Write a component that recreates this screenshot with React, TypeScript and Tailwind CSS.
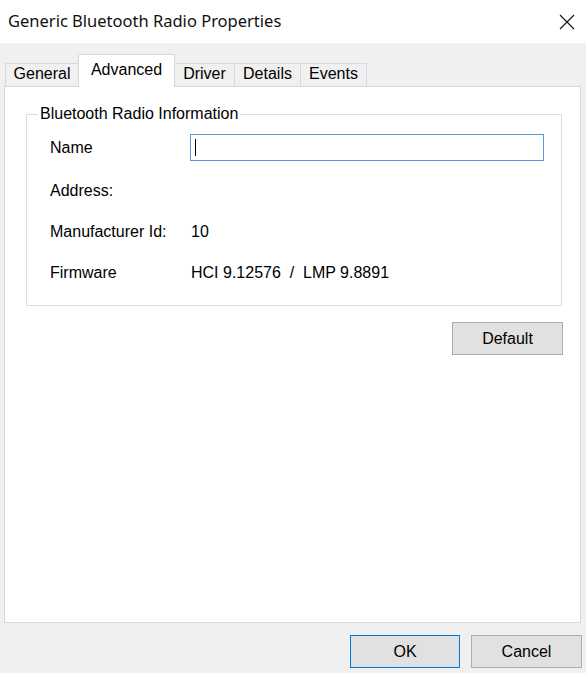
import React from 'react';

const tabs: { name: string; w: string }[] = [
    { name: 'General', w: 'w-[74px]' },
    { name: 'Advanced', w: 'w-[97px]' },
    { name: 'Driver', w: 'w-[61px]' },
    { name: 'Details', w: 'w-[67px]' },
    { name: 'Events', w: 'w-[67px]' },
];

const rows: { label: string; value?: string }[] = [
    { label: 'Address:' },
    { label: 'Manufacturer Id:', value: '10' },
    { label: 'Firmware', value: 'HCI 9.12576  /  LMP 9.8891' },
];

const App: React.FC = () => {
    return (
        <div className="w-[586px] h-[673px] bg-[#f0f0f0] flex flex-col text-[#000] overflow-hidden" style={{ fontFamily: '"Liberation Sans", Arial, sans-serif' }}>
            {/* title bar */}
            <div className="h-[43px] bg-white flex items-center justify-between pl-[8px] pr-[10px] shrink-0">
                <span className="text-[16.5px] text-[#111]" style={{ fontFamily: '"Noto Sans", "Open Sans", sans-serif' }}>Generic Bluetooth Radio Properties</span>
                <svg width="16" height="16" viewBox="0 0 16 16" className="mr-[1px]">
                    <path d="M1 1 L15 15 M15 1 L1 15" stroke="#111" strokeWidth="1.1" />
                </svg>
            </div>

            {/* tabs */}
            <div className="flex items-end pl-[5px] mt-[11px] h-[32px] relative z-10">
                {tabs.map((t) => {
                    const active = t.name === 'Advanced';
                    return active ? (
                        <div key={t.name} className={`${t.w} h-[33px] -mb-[1px] -ml-[1px] bg-white border border-[#d9d9d9] border-b-0 text-center pt-[3px] text-[16px]`}>
                            {t.name}
                        </div>
                    ) : (
                        <div key={t.name} className={`${t.w} h-[23px] bg-[#f0f0f0] border border-[#d9d9d9] border-b-0 -ml-[1px] first:ml-0 text-center text-[16px] leading-[20px]`}>
                            {t.name}
                        </div>
                    );
                })}
            </div>

            {/* panel */}
            <div className="ml-[4px] w-[577px] h-[537px] bg-white border border-[#d9d9d9] flex flex-col shrink-0">
                <fieldset className="ml-[21px] mt-[15px] w-[536px] h-[204px] border border-[#dcdcdc] pl-[23px] pr-[17px] pt-[8px]">
                    <legend className="ml-[-12px] px-[2px] text-[16px]">Bluetooth Radio Information</legend>
                    <div className="flex items-center h-[27px]">
                        <span className="w-[140px] text-[16px]">Name</span>
                        <div className="flex-1 h-[27px] border border-[#5b9bd5] flex items-center pl-[4px]">
                            <div className="w-[1px] h-[17px] bg-black" />
                        </div>
                    </div>
                    <div className="flex flex-col mt-[9px]">
                        {rows.map((r) => (
                            <div key={r.label} className="flex items-center h-[41px] text-[16px]">
                                <span className="w-[141px]">{r.label}</span>
                                <span className="whitespace-pre">{r.value}</span>
                            </div>
                        ))}
                    </div>
                </fieldset>

                <div className="flex justify-end pr-[17px] mt-[16px]">
                    <button className="w-[111px] h-[33px] bg-[#e1e1e1] border border-[#adadad] text-[16px]">Default</button>
                </div>
            </div>

            {/* footer */}
            <div className="flex justify-end gap-[11px] pr-[4px] mt-[12px]">
                <button className="w-[110px] h-[33px] bg-[#e1e1e1] border border-[#0078d7] text-[16px]">OK</button>
                <button className="w-[111px] h-[33px] bg-[#e1e1e1] border border-[#adadad] text-[16px]">Cancel</button>
            </div>
        </div>
    );
};

export default App;
